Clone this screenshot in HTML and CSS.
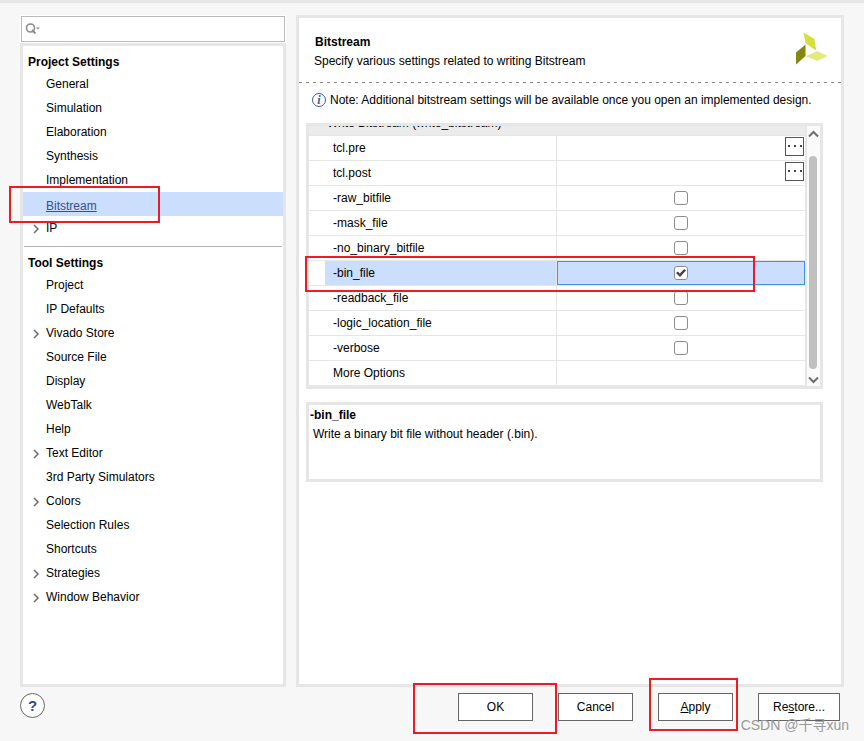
FILE: index.html
```html
<!DOCTYPE html>
<html lang="en">
<head>
<meta charset="utf-8">
<title>Settings</title>
<link rel="stylesheet" href="styles.css">
</head>
<body>
<svg class="defs" aria-hidden="true">
  <symbol id="chevron" viewBox="0 0 8 10"><path d="M2 1 L6 5 L2 9" fill="none" stroke="#6e6e6e" stroke-width="1.5"/></symbol>
</svg>
<div class="window">
  <main class="panes">
    <div class="side">
      <label class="search">
        <svg class="search-icon" viewBox="0 0 16 14" aria-hidden="true">
          <circle cx="5.5" cy="6" r="4" fill="none" stroke="#8c8c8c" stroke-width="1.6"/>
          <path d="M7 8 L10.5 11.5" stroke="#8c8c8c" stroke-width="2"/>
          <path d="M11 5.5 h4 l-2 2 z" fill="#8c8c8c"/>
        </svg>
        <input type="search" class="search-input" aria-label="Search">
      </label>
      <nav class="tree">
        <h2 class="tree-title">Project Settings</h2>
        <ul class="tree-list">
          <li><a href="#">General</a></li>
          <li><a href="#">Simulation</a></li>
          <li><a href="#">Elaboration</a></li>
          <li><a href="#">Synthesis</a></li>
          <li><a href="#">Implementation</a></li>
          <li class="current"><a href="#">Bitstream</a><span class="mark mark-nav"></span></li>
          <li><svg class="twisty"><use href="#chevron"/></svg><a href="#">IP</a></li>
        </ul>
        <hr class="tree-rule">
        <h2 class="tree-title">Tool Settings</h2>
        <ul class="tree-list">
          <li><a href="#">Project</a></li>
          <li><a href="#">IP Defaults</a></li>
          <li><svg class="twisty"><use href="#chevron"/></svg><a href="#">Vivado Store</a></li>
          <li><a href="#">Source File</a></li>
          <li><a href="#">Display</a></li>
          <li><a href="#">WebTalk</a></li>
          <li><a href="#">Help</a></li>
          <li><svg class="twisty"><use href="#chevron"/></svg><a href="#">Text Editor</a></li>
          <li><a href="#">3rd Party Simulators</a></li>
          <li><svg class="twisty"><use href="#chevron"/></svg><a href="#">Colors</a></li>
          <li><a href="#">Selection Rules</a></li>
          <li><a href="#">Shortcuts</a></li>
          <li><svg class="twisty"><use href="#chevron"/></svg><a href="#">Strategies</a></li>
          <li><svg class="twisty"><use href="#chevron"/></svg><a href="#">Window Behavior</a></li>
        </ul>
      </nav>
    </div>

    <section class="content">
      <header class="content-head">
        <div>
          <h1 class="content-title">Bitstream</h1>
          <p class="content-sub">Specify various settings related to writing Bitstream</p>
        </div>
        <svg class="logo" viewBox="0 0 33 33" aria-hidden="true">
          <path d="M8.5 0.5 L19.5 7 L21.2 18.3 L10.6 11.5 Z" fill="#d5e03a"/>
          <path d="M1 20.5 L10.5 12.5 V24 L1 32.5 Z" fill="#84890b"/>
          <path d="M11 24.2 L22 19 L32.6 24 L22.5 29 Z" fill="#e3ea7d"/>
        </svg>
      </header>
      <svg class="dashes" aria-hidden="true"><line x1="0" y1="0.5" x2="100%" y2="0.5" stroke="#8a8a8a" stroke-dasharray="3 4"/></svg>

      <div class="content-body">
        <p class="note"><span class="info" aria-hidden="true">i</span>Note: Additional bitstream settings will be available once you open an implemented design.</p>

        <div class="options">
          <div class="options-view">
            <table class="grid">
              <thead>
                <tr><th colspan="2">Write Bitstream (write_bitstream)</th></tr>
              </thead>
              <tbody>
                <tr><td><span class="name">tcl.pre</span></td><td class="browse"><button type="button" class="more" aria-label="Browse tcl.pre"><svg viewBox="0 0 17 17"><path d="M2 7h2v2H2zM8 7h2v2H8zM14 7h2v2h-2z" fill="#444"/></svg></button></td></tr>
                <tr><td><span class="name">tcl.post</span></td><td class="browse"><button type="button" class="more" aria-label="Browse tcl.post"><svg viewBox="0 0 17 17"><path d="M2 7h2v2H2zM8 7h2v2H8zM14 7h2v2h-2z" fill="#444"/></svg></button></td></tr>
                <tr><td><label class="name" for="raw">-raw_bitfile</label></td><td><input type="checkbox" class="tick" id="raw"></td></tr>
                <tr><td><label class="name" for="mask">-mask_file</label></td><td><input type="checkbox" class="tick" id="mask"></td></tr>
                <tr><td><label class="name" for="nobin">-no_binary_bitfile</label></td><td><input type="checkbox" class="tick" id="nobin"></td></tr>
                <tr class="selected"><td><label class="name" for="bin">-bin_file</label></td><td><div class="active"><input type="checkbox" class="tick" id="bin" checked></div></td></tr>
                <tr><td><label class="name" for="readback">-readback_file</label></td><td><input type="checkbox" class="tick" id="readback"></td></tr>
                <tr><td><label class="name" for="logic">-logic_location_file</label></td><td><input type="checkbox" class="tick" id="logic"></td></tr>
                <tr><td><label class="name" for="verbose">-verbose</label></td><td><input type="checkbox" class="tick" id="verbose"></td></tr>
                <tr><td><span class="name">More Options</span></td><td></td></tr>
              </tbody>
            </table>
          </div>
          <div class="scroll" aria-hidden="true">
            <svg class="scroll-arrow" viewBox="0 0 12 8"><path d="M2 6.5 L6.5 2 L11 6.5" fill="none" stroke="#6e6e6e" stroke-width="2"/></svg>
            <div class="scroll-track"><div class="scroll-thumb"></div></div>
            <svg class="scroll-arrow" viewBox="0 0 12 8"><path d="M2 1.5 L6.5 6 L11 1.5" fill="none" stroke="#6e6e6e" stroke-width="2"/></svg>
          </div>
          <span class="mark mark-row"></span>
        </div>

        <div class="about">
          <h3 class="about-title">-bin_file</h3>
          <p class="about-text">Write a binary bit file without header (.bin).</p>
        </div>
      </div>
    </section>
  </main>

  <footer class="actions">
    <button type="button" class="help" aria-label="Help">?</button>
    <div class="buttons">
      <div class="slot"><button type="button" class="btn">OK</button><span class="mark mark-ok"></span></div>
      <button type="button" class="btn">Cancel</button>
      <div class="slot"><button type="button" class="btn"><u>A</u>pply</button><span class="mark mark-apply"></span></div>
      <button type="button" class="btn btn-wide">Re<u>s</u>tore...</button>
    </div>
  </footer>
  <span class="watermark">CSDN @千寻xun</span>
</div>
</body>
</html>
```
FILE: styles.css
```css
* {
  box-sizing: border-box;
}

body {
  margin: 0;
  background: #f7f7f7;
  color: #000;
  font: 12px/20px "Liberation Sans", Arial, sans-serif;
}

h1, h2, h3, p, ul {
  margin: 0;
  padding: 0;
  font-size: 12px;
}

button, input {
  font: inherit;
  color: inherit;
  margin: 0;
}

.defs {
  position: absolute;
  width: 0;
  height: 0;
}

.window {
  position: relative;
  display: flex;
  flex-direction: column;
  min-height: 100vh;
  border-top: 3px solid #e6e6e6;
  padding: 12px 20px 20px;
}

.panes {
  flex: 1;
  display: grid;
  grid-template-columns: 266px minmax(0, 1fr);
  gap: 10px;
}

/* Red call-out frames */
.mark {
  position: absolute;
  border: 2px solid #ed1c24;
  pointer-events: none;
  z-index: 1;
}

.mark-nav {
  left: -14px;
  top: -6px;
  width: 151px;
  height: 37px;
}

.mark-row {
  left: -4px;
  top: 130px;
  width: 450px;
  height: 36px;
}

.mark-ok {
  inset: -10px -24px -13px -45px;
}

.mark-apply {
  inset: -15px -5px -10px -9px;
}

/* Sidebar */
.side {
  display: flex;
  flex-direction: column;
}

.search {
  display: flex;
  align-items: center;
  height: 26px;
  margin: 1px;
  padding-left: 3px;
  border: 1px solid #bababa;
  outline: 1px solid #fff;
  background: #fff;
}

.search-icon {
  width: 16px;
  height: 14px;
}

.search-input {
  flex: 1;
  min-width: 0;
  border: 0;
  outline: 0;
  background: none;
}

.tree {
  flex: 1;
  border: 3px solid #e6e6e6;
  background: #fff;
  padding-top: 6px;
}

.tree-title {
  padding-left: 5px;
}

.tree-list {
  list-style: none;
}

.tree-list li {
  position: relative;
  display: flex;
  align-items: center;
  height: 24px;
  padding-left: 23px;
}

.tree-list a {
  color: #000;
  text-decoration: none;
}

.tree-list .current {
  background: #cbdefe;
  padding-top: 4px;
}

.tree-list .current a {
  color: #37508c;
  text-decoration: underline;
}

.twisty {
  position: absolute;
  left: 9px;
  top: 8px;
  width: 8px;
  height: 10px;
}

.tree-rule {
  height: 1px;
  margin: 6px 1px;
  border: 0;
  background: #b0b0b0;
}

/* Content */
.content {
  border: 3px solid #e6e6e6;
  background: #fff;
}

.content-head {
  display: flex;
  justify-content: space-between;
  height: 64px;
  padding: 14px 13px 0 15px;
}

.content-title {
  padding-left: 1px;
}

.content-sub,
.about-text {
  line-height: 18px;
}

.logo {
  width: 33px;
  height: 33px;
}

.dashes {
  display: block;
  width: 100%;
  height: 1px;
}

.content-body {
  padding: 7px 18px 0 7px;
}

.note {
  display: flex;
  align-items: center;
  gap: 4px;
  padding-left: 6px;
  white-space: nowrap;
}

.info {
  width: 14px;
  height: 14px;
  border: 1px solid #3d5a96;
  border-radius: 50%;
  color: #3d5a96;
  font: italic bold 12px/12px "Liberation Serif", serif;
  text-align: center;
}

.options {
  position: relative;
  display: flex;
  margin-top: 13px;
  border: 3px solid #e6e6e6;
}

.options-view {
  flex: 1;
  height: 260px;
  display: flex;
  flex-direction: column;
  justify-content: flex-end;
  overflow: hidden;
}

.grid {
  width: 100%;
  table-layout: fixed;
  border-collapse: separate;
  border-spacing: 0;
}

.grid th,
.grid td {
  height: 25px;
  padding: 0;
  border-bottom: 1px solid #e6e6e6;
  line-height: 24px;
  text-align: left;
}

.grid th {
  padding-left: 18px;
  background: #ebebeb;
  font-weight: normal;
}

.grid td:first-child {
  border-right: 1px solid #e6e6e6;
}

.grid .browse {
  padding: 1px 1px 0 0;
  vertical-align: top;
}

.name {
  display: block;
  margin-left: 16px;
  padding-left: 8px;
}

.selected .name {
  background: #cbdefe;
}

.active {
  display: flex;
  align-items: center;
  height: 24px;
  border: 1px solid #4096d2;
  background: #cbdefe;
}

.more {
  display: block;
  width: 19px;
  height: 19px;
  margin-left: auto;
  padding: 0;
  border: 1px solid #555;
  background: #fff;
}

.more svg {
  display: block;
  width: 17px;
  height: 17px;
}

.tick {
  appearance: none;
  display: block;
  position: relative;
  width: 14px;
  height: 14px;
  margin: 0 auto;
  border: 1px solid #8c8c8c;
  border-radius: 3px;
  background: #fff;
}

.tick:checked::after {
  content: "";
  position: absolute;
  left: 1px;
  top: 2px;
  width: 10px;
  height: 8px;
  background: #444;
  clip-path: polygon(0 50%, 18% 32%, 38% 56%, 82% 0, 100% 18%, 40% 100%);
}

.scroll {
  display: flex;
  flex-direction: column;
  align-items: center;
  width: 15px;
  padding: 4px 1px 2px 0;
  border-left: 2px solid #e6e6e6;
  background: #fafafa;
}

.scroll-arrow {
  width: 12px;
  height: 8px;
}

.scroll-track {
  flex: 1;
  width: 8px;
  padding: 18px 0 7px;
}

.scroll-thumb {
  height: 100%;
  border-radius: 4px;
  background: #c0c0c0;
}

.about {
  min-height: 80px;
  margin-top: 13px;
  border: 3px solid #e6e6e6;
}

.about-title {
  padding-left: 1px;
}

.about-text {
  padding-left: 4px;
}

/* Footer */
.actions {
  display: flex;
  justify-content: space-between;
  align-items: flex-start;
  padding: 6px 4px 0 0;
}

.help {
  width: 25px;
  height: 25px;
  padding: 0;
  border: 1px solid #666;
  border-radius: 50%;
  background: #fff;
  color: #2f4a8a;
  font: bold 15px/23px "Liberation Sans", Arial, sans-serif;
}

.buttons {
  display: flex;
  gap: 25px;
}

.slot {
  position: relative;
}

.btn {
  display: block;
  width: 75px;
  height: 28px;
  padding: 0;
  border: 1px solid #666;
  background: #fff;
}

.btn-wide {
  width: 82px;
}

.watermark {
  position: absolute;
  right: 15px;
  bottom: 6px;
  color: #999;
  font: 14px/20px "Liberation Sans", "Noto Sans CJK SC", sans-serif;
}
```
